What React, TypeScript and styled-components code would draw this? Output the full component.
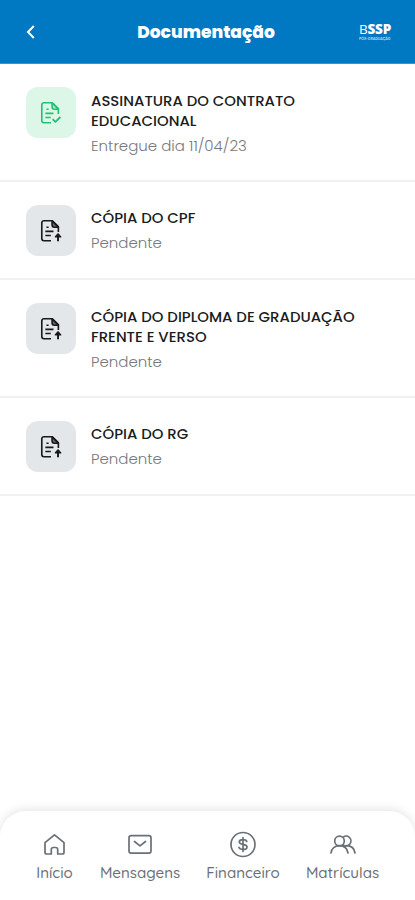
import React from "react";
import styled, { createGlobalStyle } from "styled-components";

const GlobalStyle = createGlobalStyle`
  * { box-sizing: border-box; }
  body { margin: 0; background: #fff; font-family: Poppins, Inter, sans-serif; }
`;

const Screen = styled.div`
  display: flex;
  flex-direction: column;
  height: 900px;
  width: 100%;
  overflow: hidden;
  background: #fff;
`;

const Header = styled.header`
  display: grid;
  grid-template-columns: 60px 1fr 60px;
  align-items: center;
  height: 64px;
  flex: none;
  background: #0078c2;
  color: #fff;
  border-bottom: 1px solid #3b94cd;
`;

const BackButton = styled.button`
  display: flex;
  width: 60px;
  height: 44px;
  padding: 0 0 0 25px;
  align-items: center;
  border: 0;
  background: none;
  color: #fff;
`;

const Title = styled.h1`
  margin: 0;
  padding-right: 3px;
  text-align: center;
  font-size: 17.1px;
  line-height: 24px;
  font-weight: 800;
  white-space: nowrap;
`;

const Brand = styled.div`
  display: flex;
  flex-direction: column;
  gap: 1px;
  width: 34px;
  margin-left: 4px;
  white-space: nowrap;
`;

const BrandName = styled.span`
  font-family: "Open Sans", sans-serif;
  font-size: 13.5px;
  line-height: 13px;
  font-weight: 800;
  letter-spacing: -0.2px;
`;

const BrandThin = styled.span`
  font-weight: 400;
`;

const BrandTagline = styled.span`
  font-family: Inter, sans-serif;
  font-size: 3.5px;
  line-height: 4px;
  font-weight: 600;
  opacity: 0.75;
`;

const List = styled.ul`
  flex: 1;
  margin: 0;
  padding: 0;
  list-style: none;
`;

const Row = styled.li<{ $tall: boolean }>`
  display: flex;
  align-items: flex-start;
  gap: 15px;
  height: ${(p) => (p.$tall ? 118 : 98)}px;
  padding: 23px 20px 0 26px;
  border-bottom: 2px solid #eff0f1;
`;

const IconTile = styled.div<{ $done: boolean }>`
  display: grid;
  place-items: center;
  flex: none;
  width: 50px;
  height: 51px;
  border-radius: 12px;
  background: ${(p) => (p.$done ? "#dcf6e7" : "#e4e7e9")};
  color: ${(p) => (p.$done ? "#1fc374" : "#17191c")};
`;

const RowText = styled.div<{ $tall: boolean }>`
  padding-top: ${(p) => (p.$tall ? 4 : 3)}px;
`;

const DocName = styled.div`
  font-size: 14.9px;
  line-height: 20px;
  font-weight: 500;
  color: #1b1c20;
  white-space: nowrap;
`;

const Status = styled.div`
  margin-top: 5px;
  font-size: 15px;
  line-height: 20px;
  font-weight: 300;
  color: #77797d;
  white-space: nowrap;
`;

const TabBar = styled.nav`
  display: flex;
  justify-content: space-between;
  flex: none;
  height: 89px;
  padding: 18px 36px 0;
  border-radius: 26px 26px 0 0;
  background: #fff;
  box-shadow: 0 -2px 10px rgba(0, 0, 0, 0.1);
`;

const Tab = styled.a<{ $width: number }>`
  display: flex;
  flex-direction: column;
  align-items: center;
  width: ${(p) => p.$width}px;
  color: #697077;
`;

const TabLabel = styled.span`
  margin-top: 3px;
  font-family: Quicksand, Inter, sans-serif;
  font-size: 15.1px;
  line-height: 20px;
  font-weight: 500;
  white-space: nowrap;
`;

const DocIcon = ({ done }: { done: boolean }) => (
  <svg width="26" height="26" viewBox="0 0 24 24" fill="none" stroke="currentColor" strokeWidth="1.5" strokeLinejoin="round">
    <path d="M12 21H5.500a2 2 0 0 1-2-2V4.500a2 2 0 0 1 2-2h7.800L18.800 8v5" />
    <path d="M13 2.800V6.500a2 2 0 0 0 2 2h3.800Z" fill="currentColor" fillOpacity={done ? 0.25 : 0.6} />
    <path d="M7.800 8.500h2M6.800 12.300h7.500M6.800 16.200h5" />
    {done ? (
      <path d="M13.500 17.700l2.500 2.500 4.700-4.500" strokeWidth="1.700" />
    ) : (
      <>
        <path d="M18.500 14.500l-2.600 3h5.200Z" fill="currentColor" strokeWidth="1" />
        <path d="M18.500 16v5.500" strokeWidth="1.800" />
      </>
    )}
  </svg>
);

const documents = [
  { lines: ["ASSINATURA DO CONTRATO", "EDUCACIONAL"], status: "Entregue dia 11/04/23", done: true },
  { lines: ["CÓPIA DO CPF"], status: "Pendente", done: false },
  { lines: ["CÓPIA DO DIPLOMA DE GRADUAÇÃO", "FRENTE E VERSO"], status: "Pendente", done: false },
  { lines: ["CÓPIA DO RG"], status: "Pendente", done: false },
];

const icons: Record<string, React.ReactNode> = {
  home: <path d="M10.300 24H5.800A1.800 1.800 0 0 1 4 22.200V12.600L13.500 4.900l9.500 7.700v9.600a1.800 1.800 0 0 1-1.800 1.800h-4.500v-4.500a2 2 0 0 0-2-2h-2.400a2 2 0 0 0-2 2Z" />,
  mail: <><rect x="3" y="5.700" width="22" height="17.500" rx="2.200" /><path d="M8.500 11.500l5.500 4.300 5.500-4.300" /></>,
  money: <><circle cx="14" cy="14.500" r="12" /><path d="M17.800 11.500c-.5-1.200-1.800-1.900-3.800-1.900-2.200 0-3.700.9-3.700 2.400 0 3.300 7.700 1.600 7.700 5 0 1.600-1.600 2.500-4 2.500-2.100 0-3.600-.8-4.100-2.200M14 7.700v13.800" /></>,
  people: <><circle cx="10.500" cy="11" r="4.800" /><path d="M14.200 7.200a4.800 4.800 0 1 1 0 7.600M2 23c.6-4.500 4-7.300 8.500-7.300S18.200 18.500 19 23M17.500 15.700c4.600 0 7.800 2.700 8.500 7.300" /></>,
};

const tabs = [
  { label: "Início", icon: "home", width: 37 },
  { label: "Mensagens", icon: "mail", width: 80 },
  { label: "Financeiro", icon: "money", width: 72 },
  { label: "Matrículas", icon: "people", width: 73 },
];

export default function App() {
  return (
    <>
      <GlobalStyle />
      <Screen>
        <Header>
          <BackButton aria-label="Voltar">
            <svg width="12" height="16" viewBox="0 0 12 16" fill="none" stroke="currentColor" strokeWidth="2">
              <path d="M8.800 2L3 8l5.800 6" />
            </svg>
          </BackButton>
          <Title>Documentação</Title>
          <Brand>
            <BrandName><BrandThin>B</BrandThin>SSP</BrandName>
            <BrandTagline>PÓS-GRADUAÇÃO</BrandTagline>
          </Brand>
        </Header>
        <List>
          {documents.map((doc) => (
            <Row key={doc.lines[0]} $tall={doc.lines.length > 1}>
              <IconTile $done={doc.done}><DocIcon done={doc.done} /></IconTile>
              <RowText $tall={doc.lines.length > 1}>
                {doc.lines.map((text) => <DocName key={text}>{text}</DocName>)}
                <Status>{doc.status}</Status>
              </RowText>
            </Row>
          ))}
        </List>
        <TabBar>
          {tabs.map((tab) => (
            <Tab key={tab.label} $width={tab.width}>
              <svg width="28" height="31" viewBox="0 -1 28 31" fill="none" stroke="currentColor" strokeWidth="1.700" strokeLinecap="round" strokeLinejoin="round">{icons[tab.icon]}</svg>
              <TabLabel>{tab.label}</TabLabel>
            </Tab>
          ))}
        </TabBar>
      </Screen>
    </>
  );
}
